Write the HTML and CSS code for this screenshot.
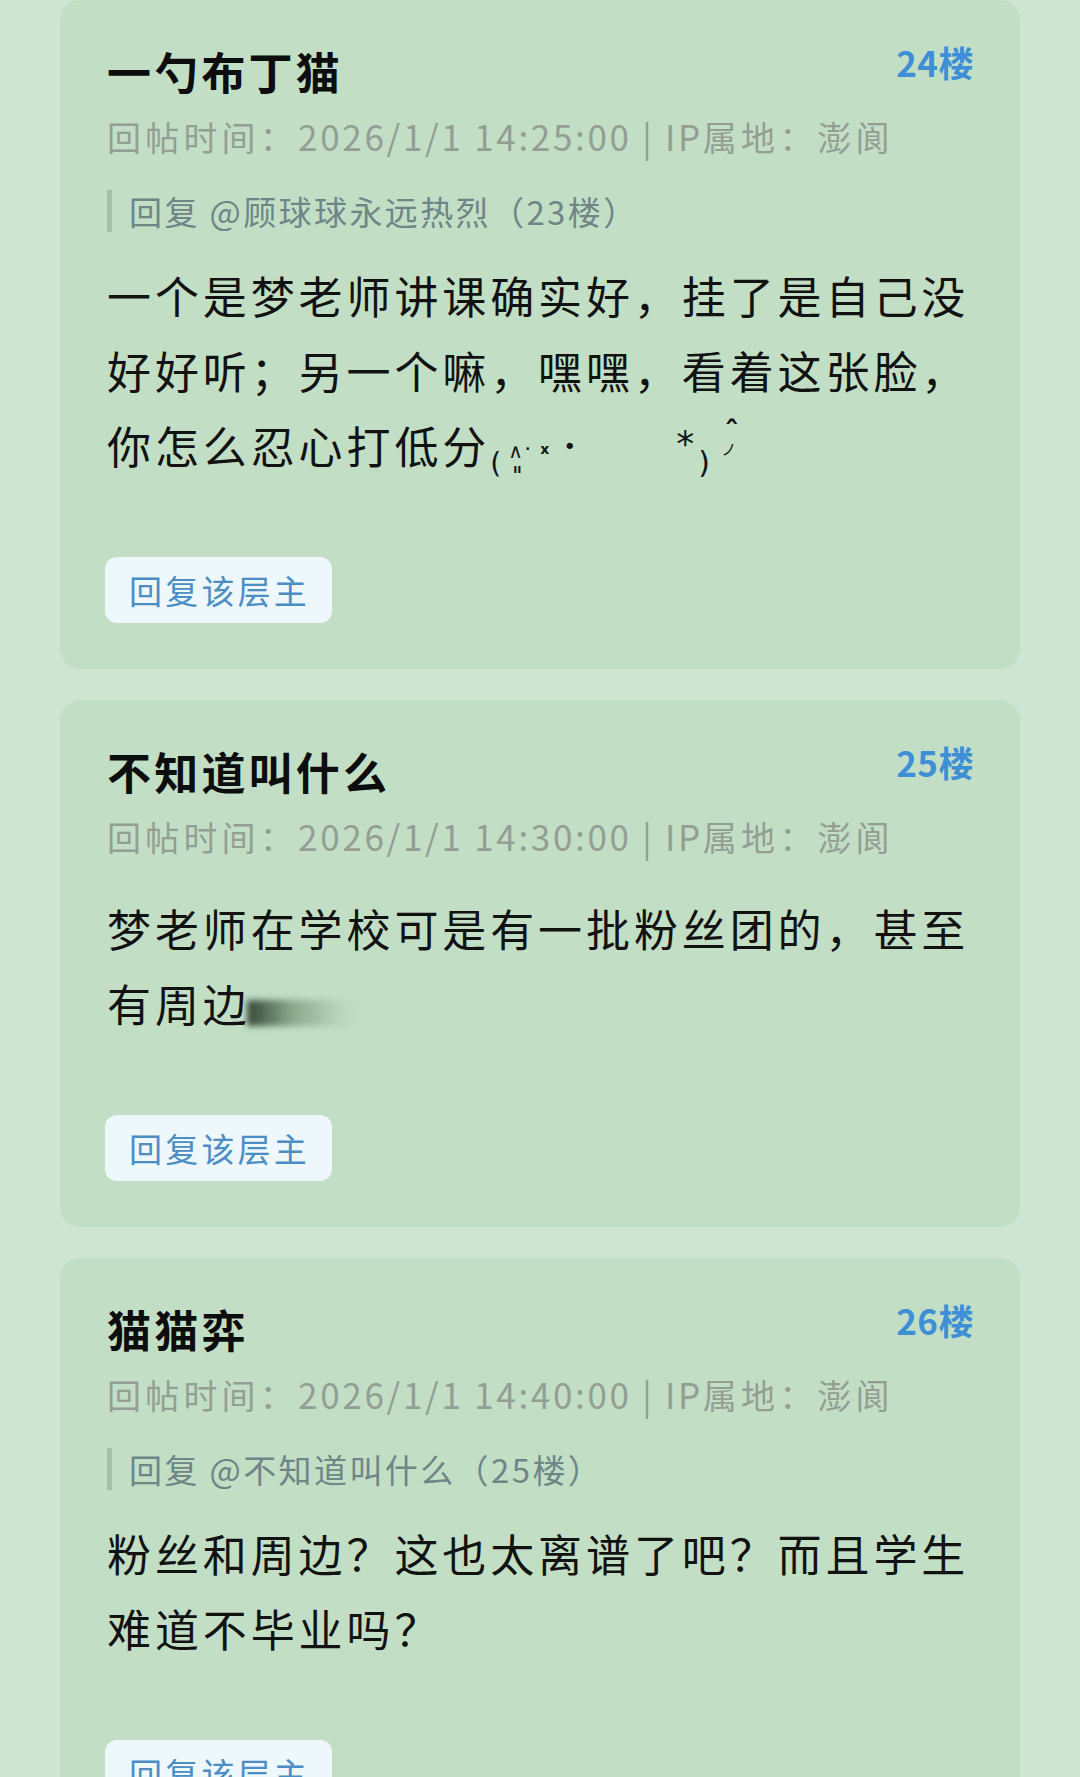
FILE: index.html
```html
<!DOCTYPE html>
<html lang="zh-CN">
<head>
<meta charset="utf-8">
<title>楼层回复</title>
<link rel="stylesheet" href="styles.css">
</head>
<body>
<div class="page">
  <div class="card">
    <div class="head">
      <div class="name">一勺布丁猫</div>
      <div class="floor">24楼</div>
    </div>
    <div class="meta">回帖时间：<span class="num">2026/1/1 14:25:00 | IP</span>属地：澎阆</div>
    <div class="quote">回复 @顾球球永远热烈（23楼）</div>
    <div class="content">一个是梦老师讲课确实好，挂了是自己没好好听；另一个嘛，嘿嘿，看着这张脸，你怎么忍心打低分<span class="kao"><span class="k k1">(</span><span class="k k2">∧</span><span class="k k3">·</span><span class="k k4">ıı</span><span class="k k5">x</span><span class="k k6">•</span><span class="k k7">*</span><span class="k k8">)</span><span class="k k9">ˆ</span><span class="k k10">ノ</span></span></div>
    <div class="btn">回复该层主</div>
  </div>
  <div class="card">
    <div class="head">
      <div class="name">不知道叫什么</div>
      <div class="floor">25楼</div>
    </div>
    <div class="meta">回帖时间：<span class="num">2026/1/1 14:30:00 | IP</span>属地：澎阆</div>
    <div class="content">梦老师在学校可是有一批粉丝团的，甚至有周边<span class="smear"></span></div>
    <div class="btn">回复该层主</div>
  </div>
  <div class="card">
    <div class="head">
      <div class="name">猫猫弈</div>
      <div class="floor">26楼</div>
    </div>
    <div class="meta">回帖时间：<span class="num">2026/1/1 14:40:00 | IP</span>属地：澎阆</div>
    <div class="quote">回复 @不知道叫什么（25楼）</div>
    <div class="content">粉丝和周边？这也太离谱了吧？而且学生难道不毕业吗？</div>
    <div class="btn">回复该层主</div>
  </div>
</div>
</body>
</html>
```

FILE: styles.css
```css
html, body {
  margin: 0;
  padding: 0;
  background: #cde5d2;
}
body {
  font-family: "Noto Sans CJK SC", "Noto Sans", sans-serif;
  height: 1777px;
  overflow: hidden;
}
.page {
  padding: 0 60px;
  display: flex;
  flex-direction: column;
  gap: 31px;
}
.card {
  background: #c2dfc6;
  border-radius: 20px;
  padding: 41px 46px 46px 47px;
  display: flex;
  flex-direction: column;
  align-items: flex-start;
}
.head {
  align-self: stretch;
  display: flex;
  justify-content: space-between;
  align-items: flex-start;
  height: 60px;
}
.name {
  font-size: 44px;
  font-weight: 700;
  line-height: 60px;
  letter-spacing: 3.2px;
  color: #0d0d0d;
}
.floor {
  font-size: 35px;
  font-weight: 700;
  line-height: 50px;
  color: #3e8fd6;
  letter-spacing: 0.5px;
  margin-top: -4px;
}
.meta {
  margin-top: 10px;
  font-size: 34px;
  line-height: 50px;
  letter-spacing: 4.2px;
  color: #939e94;
  white-space: nowrap;
}
.meta .num {
  font-size: 35px;
  letter-spacing: 2.7px;
}
.quote {
  margin-top: 28px;
  border-left: 5px solid #a5c2a8;
  padding-left: 17px;
  font-size: 33px;
  line-height: 42px;
  letter-spacing: 2.4px;
  color: #6f8586;
  white-space: nowrap;
}
.content {
  margin-top: 29px;
  font-size: 44px;
  line-height: 75px;
  letter-spacing: 3.9px;
  color: #121212;
  width: 867px;
}
.quote + .content {
  margin-top: 26px;
}
.kao {
  display: inline-block;
  position: relative;
  width: 250px;
  height: 75px;
  vertical-align: top;
  letter-spacing: 0;
  font-family: "DejaVu Sans", sans-serif;
}
.k {
  position: absolute;
  line-height: 1;
  color: #151515;
}
.k1 { left: 0px; top: 42px; font-size: 28px; }
.k2 { left: 18px; top: 33px; font-size: 20px; }
.k3 { left: 34px; top: 30px; font-size: 22px; }
.k4 { left: 23px; top: 55px; font-size: 12px; font-weight: 700; }
.k5 { left: 50px; top: 34px; font-size: 14px; font-weight: 700; }
.k6 { left: 73px; top: 28px; font-size: 22px; }
.k7 { left: 186px; top: 18px; font-size: 36px; }
.k8 { left: 208px; top: 40px; font-size: 30px; }
.k9 { left: 234px; top: 10px; font-size: 30px; font-weight: 700; }
.k10 { left: 231px; top: 33px; font-size: 15px; font-family: "Noto Sans CJK JP", sans-serif; }
.smear {
  display: inline-block;
  width: 112px;
  height: 26px;
  vertical-align: -4px;
  margin-left: -4px;
  background: linear-gradient(to right, rgba(30, 45, 30, 0.85), rgba(70, 100, 70, 0.45) 40%, rgba(140, 170, 140, 0.2) 80%, rgba(194, 223, 198, 0));
  filter: blur(3px);
}
.btn {
  margin-top: 74px;
  width: 227px;
  height: 66px;
  border-radius: 12px;
  background: #eef7fb;
  color: #4a8ec4;
  font-size: 33px;
  letter-spacing: 3.2px;
  line-height: 66px;
  box-sizing: border-box;
  padding-left: 24px;
  margin-left: -2px;
}
```
